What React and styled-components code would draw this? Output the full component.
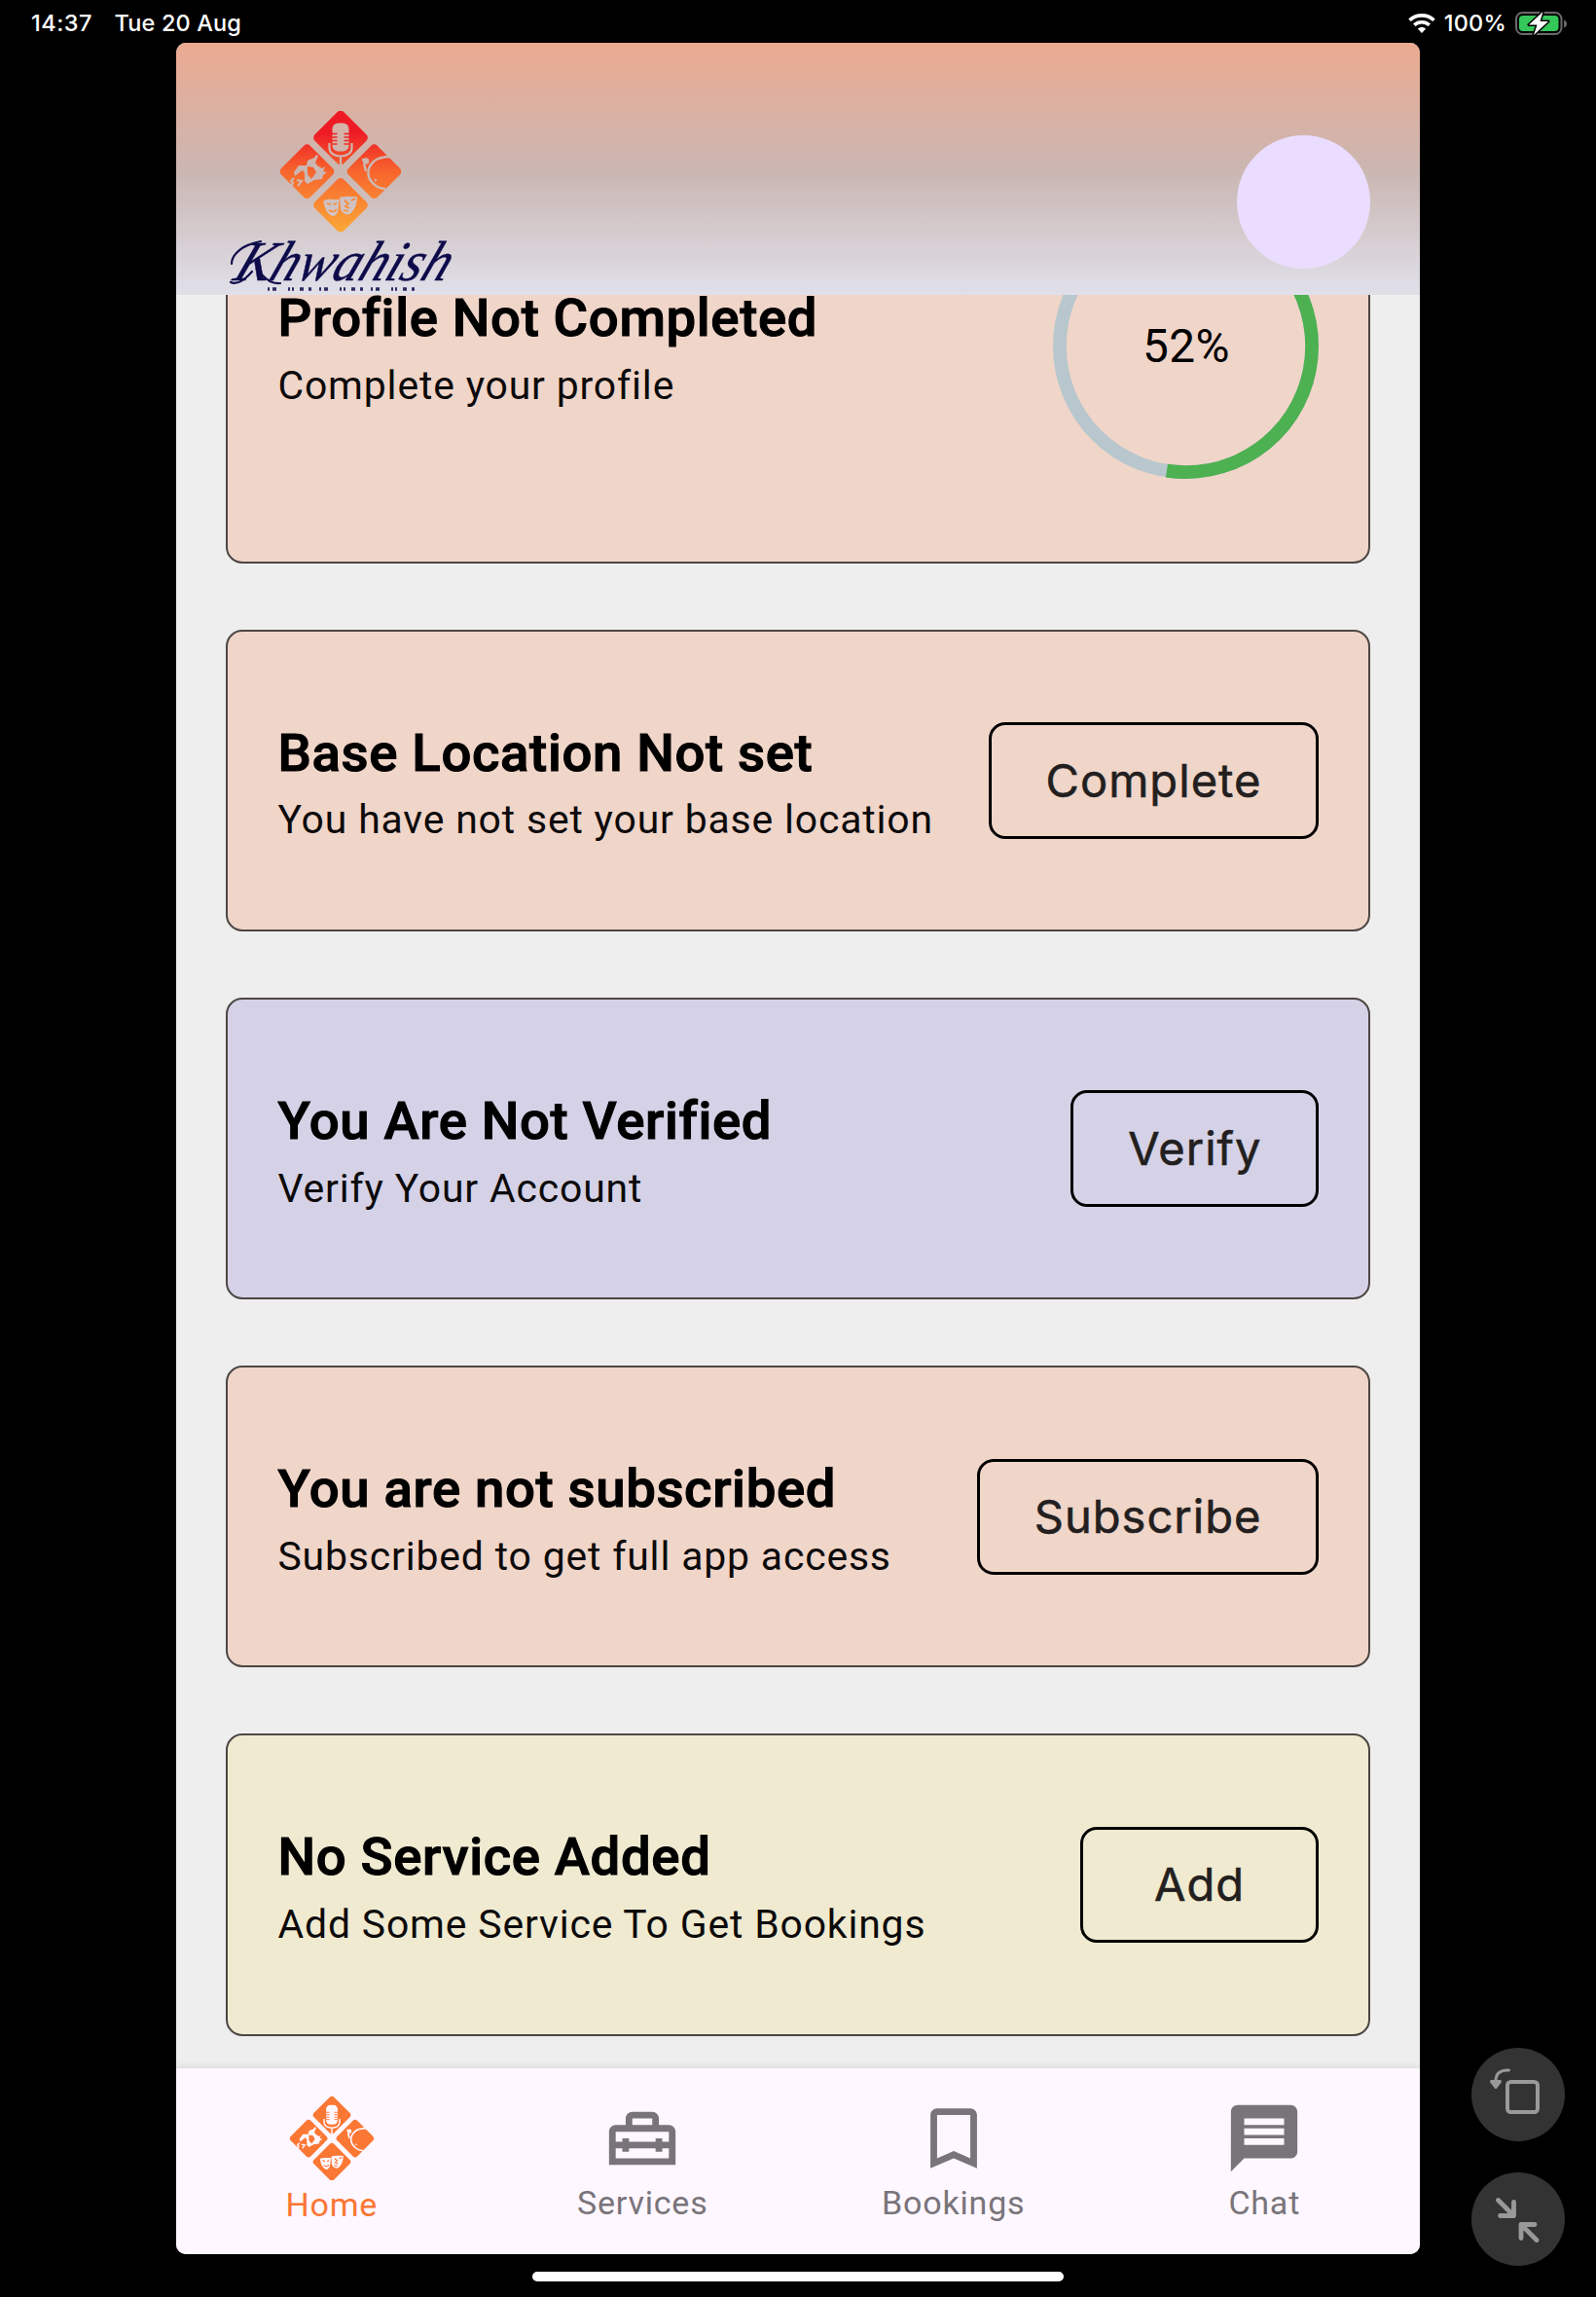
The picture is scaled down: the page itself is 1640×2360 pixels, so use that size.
import React from "react";
import styled, { createGlobalStyle } from "styled-components";
import { MdOutlineHomeRepairService, MdBookmarkBorder, MdMessage } from "react-icons/md";

const Global = createGlobalStyle`
  *, *::before, *::after { box-sizing: border-box; }
  body { margin: 0; background: #000; }
`;

const Device = styled.div`
  width: 1640px;
  height: 2360px;
  display: flex;
  flex-direction: column;
  background: #000;
  overflow: hidden;
  font-family: Roboto, "Liberation Sans", sans-serif;
`;

const StatusBar = styled.div`
  height: 44px;
  padding: 4px 29px 0 32px;
  display: flex;
  align-items: center;
  justify-content: space-between;
  color: #fff;
  font: 500 23.5px/30px Inter, "Liberation Sans", sans-serif;
`;

const StatusGroup = styled.div`
  display: flex;
  align-items: center;
  gap: ${(p) => p.$gap}px;
`;

const StatusText = styled.span`
  letter-spacing: ${(p) => p.$spacing || 0}px;
`;

const Body = styled.div`
  height: 2271.5px;
  display: grid;
  grid-template-columns: 181px 1278px 181px;
`;

const Window = styled.main`
  grid-column: 2;
  height: 2271.5px;
  display: flex;
  flex-direction: column;
  overflow: hidden;
  border-radius: 10px;
  background: #eee;
`;

const Header = styled.header`
  flex: none;
  height: 258.6px;
  padding: 69px 51px 0 53px;
  display: flex;
  justify-content: space-between;
  background: linear-gradient(#ebaa90, #cab7b3 52%, #e0e0ea);
`;

const Brand = styled.div`
  width: 232px;
  display: flex;
  flex-direction: column;
  align-items: center;
`;

const Avatar = styled.div`
  width: 136.6px;
  height: 136.6px;
  margin-top: 26px;
  border-radius: 50%;
  background: #eaddff;
`;

const Scroll = styled.section`
  flex: 1;
  min-height: 0;
  overflow: hidden;
`;

const CardList = styled.div`
  display: flex;
  flex-direction: column;
  gap: 68px;
  margin-top: -170.6px;
  padding: 0 51px;
`;

const Card = styled.article`
  height: ${(p) => p.$height}px;
  padding: 0 51.5px;
  display: flex;
  align-items: center;
  justify-content: space-between;
  border: 2px solid #4c4643;
  border-radius: 17px;
  background: ${(p) => p.$color};
`;

const CardTitle = styled.h2`
  margin: 0 0 2.8px;
  font-size: 54.5px;
  line-height: 79px;
  font-weight: 500;
  letter-spacing: 0.65px;
  -webkit-text-stroke: 1.1px #000;
  color: #000;
  white-space: nowrap;
`;

const CardText = styled.p`
  margin: 0;
  font-size: 40.9px;
  line-height: 54.6px;
  letter-spacing: 0.84px;
  color: #0c0a0a;
  white-space: nowrap;
`;

const ActionButton = styled.button`
  height: 119.4px;
  min-width: 245px;
  padding: 0 55px 0 56px;
  border: 3.4px solid #000;
  border-radius: 17px;
  background: transparent;
  color: #231f20;
  font: 400 47px/60px Inter, "Liberation Sans", sans-serif;
  letter-spacing: 1.05px;
  -webkit-text-stroke: 0.6px #231f20;
`;

const Ring = styled.div`
  width: 273px;
  height: 273px;
  display: grid;
  place-items: center;
  border-radius: 50%;

  > * { grid-area: 1 / 1; }
`;

const RingValue = styled.span`
  padding: 2px 0 0 2px;
  font-size: 47.7px;
  letter-spacing: 0.5px;
  color: #000;
`;

const NavBar = styled.nav`
  flex: none;
  height: 190.5px;
  display: grid;
  grid-template-columns: repeat(4, 1fr);
  background: #fef7ff;
  box-shadow: 0 -1px 8px rgba(0, 0, 0, 0.1);
`;

const NavItem = styled.div`
  padding-top: ${(p) => (p.$active ? 28.5 : 31)}px;
  display: flex;
  flex-direction: column;
  align-items: center;
  color: ${(p) => (p.$active ? "#fb7734" : "#79747a")};
`;

const NavLabel = styled.span`
  margin-top: ${(p) => (p.$active ? 3.5 : 3)}px;
  font-size: 34px;
  line-height: 44px;
  letter-spacing: 0.8px;
`;

const SideControls = styled.aside`
  display: flex;
  flex-direction: column;
  justify-content: flex-end;
  gap: 32px;
  padding: 0 32px 0 53px;
  height: 2284px;
`;

const RoundControl = styled.div`
  width: 96px;
  height: 96px;
  border-radius: 50%;
  background: #333;
`;

const Footer = styled.footer`
  flex: 1;
  display: flex;
  justify-content: center;
  padding-top: 18px;
`;

const HomeIndicator = styled.div`
  width: 546px;
  height: 10px;
  border-radius: 5px;
  background: #fff;
`;

function Emblem({ id, size, fill }) {
  return (
    <svg width={size} height={size} viewBox="0 0 124 124">
      <defs>
        <linearGradient id={`${id}-g`} gradientUnits="userSpaceOnUse" x1="0" y1="0" x2="0" y2="124">
          <stop offset="0.18" stopColor="#ee1b25" />
          <stop offset="0.5" stopColor="#f7652d" />
          <stop offset="1" stopColor="#fba738" />
        </linearGradient>
        <mask id={`${id}-m`} maskUnits="userSpaceOnUse" x="0" y="0" width="124" height="124">
          <g fill="#fff">
            <rect x="41" y="6.5" width="42" height="42" rx="4.500" transform="rotate(45 62 27.5)" />
            <rect x="6.5" y="41.2" width="42" height="42" rx="4.500" transform="rotate(45 27.5 62.2)" />
            <rect x="75.5" y="41.2" width="42" height="42" rx="4.500" transform="rotate(45 96.5 62.2)" />
            <rect x="41" y="75.8" width="42" height="42" rx="4.500" transform="rotate(45 62 96.8)" />
          </g>
          <rect x="53.5" y="12.5" width="17" height="29" rx="6" fill="#000" />
          <path d="M53 23.5h5.5M53 27h5.5M53 30.5h5.5M53 34h5.5M65.5 23.5H71M65.5 27H71M65.5 30.5H71M65.5 34H71" stroke="#fff" strokeWidth="1.3" />
          <path d="M50.500 33v5c0 5 4.500 8.500 11.500 8.500s11.500-3.500 11.500-8.500v-5M62 46v10" fill="none" stroke="#000" strokeWidth="2.2" />
          <path d="M37 45l-2 3-7 3-1 5-8 0-5 7 1 4 5-4 3-2 2 3 0 8 3 3 7-4 8-1 1-4 4-3-4-1 2-5-3 2-5-3-2-3 3-7z" fill="#000" />
          <path d="M28 57l6 1 3 5-5 7-4-5z" fill="#fff" />
          <path d="M14 69l-3 3 2 2-2 4M17 71l5 1-4 5" fill="none" stroke="#000" strokeWidth="2" />
          <path d="M114 47c-9 0-14 1-18 5-8 7-7 17 0 23 4 4 7 5 12 5M89 51l-5-1M86 54l2 8" fill="none" stroke="#000" strokeWidth="2.4" />
          <circle cx="88" cy="51.500" r="3.2" fill="#000" />
          <circle cx="98" cy="71" r="1.2" fill="#000" />
          <path d="M44.500 92c5-2 10-1 16-1l-1 11c-1 4-3 6-6 6-5-2-8-7-9-16z" fill="#000" />
          <path d="M61 89c6-2 11-1 18-1 0 8-3 15-8 18-5 1-8-2-9-5z" fill="#000" />
          <path d="M48 95l4 1M55 96l3-1M50 102c3 2 6 2 8-1M66 92l4 3-3 3 4 2M73 92l4-2M65 102l5 1" fill="none" stroke="#fff" strokeWidth="1.6" />
        </mask>
      </defs>
      <rect width="124" height="124" fill={fill || `url(#${id}-g)`} mask={`url(#${id}-m)`} />
    </svg>
  );
}

const EmblemSlot = styled.div`
  height: 125px;
  padding-top: 1px;
`;

const WordmarkSvg = styled.svg`
  flex: none;
  margin-top: 3px;
  overflow: visible;
`;

const WordmarkText = styled.text`
  font: italic 58px "Liberation Serif", serif;
  fill: #0e0b4b;
  stroke: #0e0b4b;
  stroke-width: 0.4px;
`;

function Wordmark() {
  return (
    <WordmarkSvg width="232" height="61" viewBox="0 0 232 61">
      <WordmarkText x="4" y="47" textLength="219" lengthAdjust="spacingAndGlyphs" transform="translate(19 0) skewX(-22)">
        Khwahish
      </WordmarkText>
      <path d="M4 30C4 20 16 10 34 7M3 49c7 3 15-3 22-11M34 40c6 7 12 11 20 10" fill="none" stroke="#0e0b4b" strokeWidth="2.2" strokeLinecap="round" />
      <path d="M41 56h152" stroke="#0e0b4b" strokeWidth="3.500" strokeDasharray="2 3 4 12 2 2 2 6 4 5 3 8" opacity="0.85" />
    </WordmarkSvg>
  );
}

function Progress({ percent }) {
  const r = 129.6;
  const c = 2 * Math.PI * r;
  return (
    <Ring>
      <svg width="273" height="273" viewBox="0 0 273 273" fill="none" strokeWidth="13.7">
        <circle cx="136.500" cy="136.500" r={r} stroke="#b7c7cd" />
        <circle cx="136.500" cy="136.500" r={r} stroke="#4db051" strokeDasharray={`${(c * percent) / 100} ${c}`} transform="rotate(-90 136.5 136.5)" />
      </svg>
      <RingValue>{Math.round(percent)}%</RingValue>
    </Ring>
  );
}

const WifiIcon = () => (
  <svg width="28" height="20" viewBox="0 0 28 20" fill="none" stroke="#fff" strokeWidth="3.6">
    <path d="M1.500 6.800C8.500.2 19.500.2 26.500 6.800" />
    <path d="M6.200 11.700c4.500-4 11.100-4 15.600 0" />
    <path d="M9.800 15.600c2.400-2.100 6-2.100 8.400 0L14 20z" fill="#fff" stroke="none" />
  </svg>
);

const BatteryIcon = () => (
  <svg width="54" height="26" viewBox="0 0 54 26">
    <rect x="1" y="2" width="46.500" height="22" rx="6.500" fill="none" stroke="#6a6a6c" strokeWidth="2" />
    <rect x="4" y="5" width="40.500" height="16" rx="4" fill="#34c759" />
    <path d="M50 9.500c4 1.200 4 6.800 0 8z" fill="#6a6a6c" />
    <path d="M28.500 1L14 14.500h8.500L19 25l15-14h-8.500z" fill="#fff" stroke="#000" strokeWidth="3" paintOrder="stroke" strokeLinejoin="round" />
  </svg>
);

const RotateIcon = () => (
  <svg width="96" height="96" viewBox="0 0 96 96" fill="none" stroke="#999" strokeWidth="4">
    <rect x="37" y="35" width="31" height="31" rx="3.500" />
    <path d="M38.500 23c-9-.5-13.500 3.500-13.500 11" strokeWidth="3" strokeLinecap="round" />
    <path d="M20.500 34.500h9L25 40.500z" fill="#999" strokeWidth="3" strokeLinejoin="round" />
  </svg>
);

const ShrinkIcon = () => (
  <svg width="96" height="96" viewBox="0 0 96 96" fill="none" stroke="#999" strokeWidth="4.800" strokeLinecap="round" strokeLinejoin="round">
    <path d="M27.500 28.500l16 16M43.500 30.500v14h-14M67 69.500l-16-16M51 67.500v-14h14" />
  </svg>
);

const cards = [
  { title: "Base Location Not set", text: "You have not set your base location", action: "Complete", color: "#f0d5c9" },
  { title: "You Are Not Verified", text: "Verify Your Account", action: "Verify", color: "#d5d2e7" },
  { title: "You are not subscribed", text: "Subscribed to get full app access", action: "Subscribe", color: "#f0d5c9" },
  { title: "No Service Added", text: "Add Some Service To Get Bookings", action: "Add", color: "#f0ead1" },
];

const navItems = [
  { label: "Home", active: true, icon: <Emblem id="nav" size={86} fill="#fb7734" /> },
  { label: "Services", icon: <MdOutlineHomeRepairService size={82} /> },
  { label: "Bookings", icon: <MdBookmarkBorder size={82} /> },
  { label: "Chat", icon: <MdMessage size={82} /> },
];

export default function App() {
  return (
    <Device>
      <Global />
      <StatusBar>
        <StatusGroup $gap={22.5}>
          <StatusText $spacing={0.5}>14:37</StatusText>
          <StatusText $spacing={0.15}>Tue 20 Aug</StatusText>
        </StatusGroup>
        <StatusGroup $gap={9}>
          <WifiIcon />
          <StatusText $spacing={0.2}>100%</StatusText>
          <BatteryIcon />
        </StatusGroup>
      </StatusBar>
      <Body>
        <Window>
          <Header>
            <Brand>
              <EmblemSlot>
                <Emblem id="brand" size={124} />
              </EmblemSlot>
              <Wordmark />
            </Brand>
            <Avatar />
          </Header>
          <Scroll>
            <CardList>
              <Card $height={446.8} $color="#f0d5c9">
                <div>
                  <CardTitle>Profile Not Completed</CardTitle>
                  <CardText>Complete your profile</CardText>
                </div>
                <Progress percent={52.4} />
              </Card>
              {cards.map((c) => (
                <Card key={c.title} $height={310.2} $color={c.color}>
                  <div>
                    <CardTitle>{c.title}</CardTitle>
                    <CardText>{c.text}</CardText>
                  </div>
                  <ActionButton>{c.action}</ActionButton>
                </Card>
              ))}
            </CardList>
          </Scroll>
          <NavBar>
            {navItems.map((n) => (
              <NavItem key={n.label} $active={n.active}>
                {n.icon}
                <NavLabel $active={n.active}>{n.label}</NavLabel>
              </NavItem>
            ))}
          </NavBar>
        </Window>
        <SideControls>
          <RoundControl><RotateIcon /></RoundControl>
          <RoundControl><ShrinkIcon /></RoundControl>
        </SideControls>
      </Body>
      <Footer>
        <HomeIndicator />
      </Footer>
    </Device>
  );
}
